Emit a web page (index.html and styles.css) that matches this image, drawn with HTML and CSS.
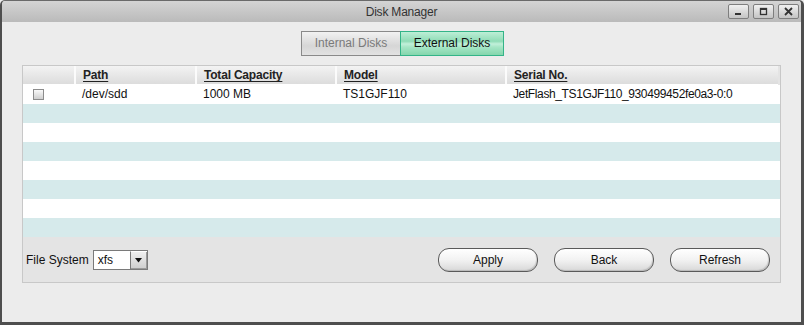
FILE: index.html
```html
<!DOCTYPE html>
<html>
<head>
<meta charset="utf-8">
<link rel="stylesheet" href="styles.css">
</head>
<body>
<div class="window">
  <div class="titlebar">
    <div class="title">Disk Manager</div>
    <div class="winbtns">
      <span class="wbtn"><svg width="9" height="9" viewBox="0 0 9 9"><rect x="1" y="6" width="6" height="2" fill="#333"/></svg></span>
      <span class="wbtn"><svg width="9" height="9" viewBox="0 0 9 9"><rect x="1.5" y="1.5" width="6" height="6" fill="none" stroke="#333" stroke-width="1.3"/><rect x="1" y="1" width="7" height="2" fill="#333"/></svg></span>
      <span class="wbtn"><svg width="9" height="9" viewBox="0 0 9 9"><path d="M1 1 L8 8 M8 1 L1 8" stroke="#333" stroke-width="1.8"/></svg></span>
    </div>
  </div>
  <div class="content">
    <div class="tabs">
      <div class="tab tab-off">Internal Disks</div>
      <div class="tab tab-on">External Disks</div>
    </div>
    <div class="panel">
      <div class="grid">
        <div class="hrow">
          <div class="hc"></div>
          <div class="hc"><u>Path</u></div>
          <div class="hc"><u>Total Capacity</u></div>
          <div class="hc"><u>Model</u></div>
          <div class="hc"><u>Serial No.</u></div>
        </div>
        <div class="row">
          <div class="c"><span class="chk"></span></div>
          <div class="c">/dev/sdd</div>
          <div class="c">1000 MB</div>
          <div class="c">TS1GJF110</div>
          <div class="c serial">JetFlash_TS1GJF110_930499452fe0a3-0:0</div>
        </div>
        <div class="row alt"></div>
        <div class="row"></div>
        <div class="row alt"></div>
        <div class="row"></div>
        <div class="row alt"></div>
        <div class="row"></div>
        <div class="row alt"></div>
      </div>
      <div class="bottom">
        <div class="fs">
          <span class="fslabel">File System</span>
          <span class="select"><span class="selval">xfs</span><span class="arrow"><svg width="9" height="5" viewBox="0 0 9 5"><path d="M1 0 L8 0 L4.5 4.5 Z" fill="#111"/></svg></span></span>
        </div>
        <div class="actions">
          <button class="btn">Apply</button>
          <button class="btn">Back</button>
          <button class="btn">Refresh</button>
        </div>
      </div>
    </div>
  </div>
</div>
</body>
</html>
```

FILE: styles.css
```css
* { box-sizing: border-box; }
html, body { margin: 0; padding: 0; }
body {
  width: 804px;
  height: 325px;
  background: #ececec;
  font-family: "Liberation Sans", Arial, sans-serif;
  font-size: 12px;
  color: #111;
  overflow: hidden;
}
.window {
  width: 804px;
  height: 325px;
  border-left: 2px solid #4e4e4e;
  border-right: 3px solid #4e4e4e;
  border-bottom: 3px solid #4e4e4e;
  border-top: 1px solid #6a6a6a;
  border-radius: 5px 5px 0 0;
  background: #ececec;
  display: flex;
  flex-direction: column;
}
.titlebar {
  height: 21px;
  background: linear-gradient(#d4d4d4, #bababa);
  border-radius: 4px 4px 0 0;
  position: relative;
  display: flex;
  align-items: center;
  justify-content: center;
}
.title {
  color: #333;
  font-size: 12px;
  letter-spacing: -0.2px;
}
.winbtns {
  position: absolute;
  right: 2px;
  top: 3px;
  display: flex;
  gap: 4px;
}
.wbtn {
  width: 21px;
  height: 15px;
  border: 1px solid #7e7e7e;
  border-radius: 2px;
  background: linear-gradient(#f0f0f0, #c4c4c4);
  display: flex;
  align-items: center;
  justify-content: center;
}
.content {
  flex: 1;
  padding: 9px 20px 0 20px;
  display: flex;
  flex-direction: column;
}
.tabs {
  display: flex;
  justify-content: center;
  margin-left: 2px;
}
.tab {
  height: 25px;
  line-height: 23px;
  text-align: center;
}
.tab-off {
  width: 99px;
  border: 1px solid #8a8a8a;
  border-right: none;
  background: linear-gradient(#f2f2f2, #d6d6d6 60%, #e2e2e2);
  color: #7a7a7a;
}
.tab-on {
  width: 104px;
  border: 1px solid #33b488;
  background: linear-gradient(#bdeed6, #8fdcb6 40%, #c2f0da 52%, #a6e6c6 65%, #84d6ad);
  color: #111;
}
.panel {
  margin-top: 9px;
  height: 218px;
  border: 1px solid #c8c8c8;
  background: #e4e4e4;
  display: flex;
  flex-direction: column;
}
.grid { display: flex; flex-direction: column; }
.hrow, .row {
  display: grid;
  grid-template-columns: 51px 121px 140px 170px 1fr;
}
.hrow {
  height: 19px;
  margin-right: 2px;
  background: linear-gradient(#f3f3f3, #dcdcdc);
  border-bottom: 1px solid #fff;
}
.hc {
  border-left: 2px solid #fbfbfb;
  padding-left: 7px;
  line-height: 18px;
  font-weight: bold;
  color: #222;
  letter-spacing: -0.2px;
}
.hc:first-child { border-left: none; }
.hc u { text-decoration-thickness: 1px; text-underline-offset: 2px; }
.row {
  height: 19px;
  background: #fff;
}
.row.alt { background: #d6eaeb; }
.c {
  padding-left: 8px;
  line-height: 18px;
}
.c.serial { letter-spacing: -0.38px; }
.c:first-child {
  padding-left: 10px;
  display: flex;
  align-items: center;
}
.chk {
  width: 11px;
  height: 11px;
  border: 1px solid #8c8c8c;
  background: linear-gradient(#fafafa, #cfcfcf);
}
.bottom {
  flex: 1;
  display: flex;
  align-items: center;
  justify-content: space-between;
  padding: 1px 10px 0 3px;
}
.fs { display: flex; align-items: center; gap: 4px; }
.fslabel { font-size: 12px; }
.select {
  width: 55px;
  height: 20px;
  border: 1px solid #7a7a7a;
  background: #fff;
  display: flex;
}
.selval { flex: 1; padding-left: 4px; line-height: 18px; font-size: 12px; }
.arrow {
  width: 17px;
  border-left: 1px solid #7a7a7a;
  border-top: 1px solid #fff;
  background: linear-gradient(#f0f0f0, #cdcdcd);
  display: flex;
  align-items: center;
  justify-content: center;
  box-shadow: inset -1px -1px 0 #9a9a9a;
}
.actions { display: flex; gap: 16px; }
.btn {
  width: 100px;
  height: 24px;
  border: 1px solid #5a5a5a;
  border-radius: 11px;
  background: linear-gradient(#ffffff, #f2f2f2 50%, #d8d8d8);
  box-shadow: inset -1px -1px 1px rgba(0,0,0,0.15);
  font-family: "Liberation Sans", Arial, sans-serif;
  font-size: 12px;
  color: #111;
  padding: 0;
}
```
